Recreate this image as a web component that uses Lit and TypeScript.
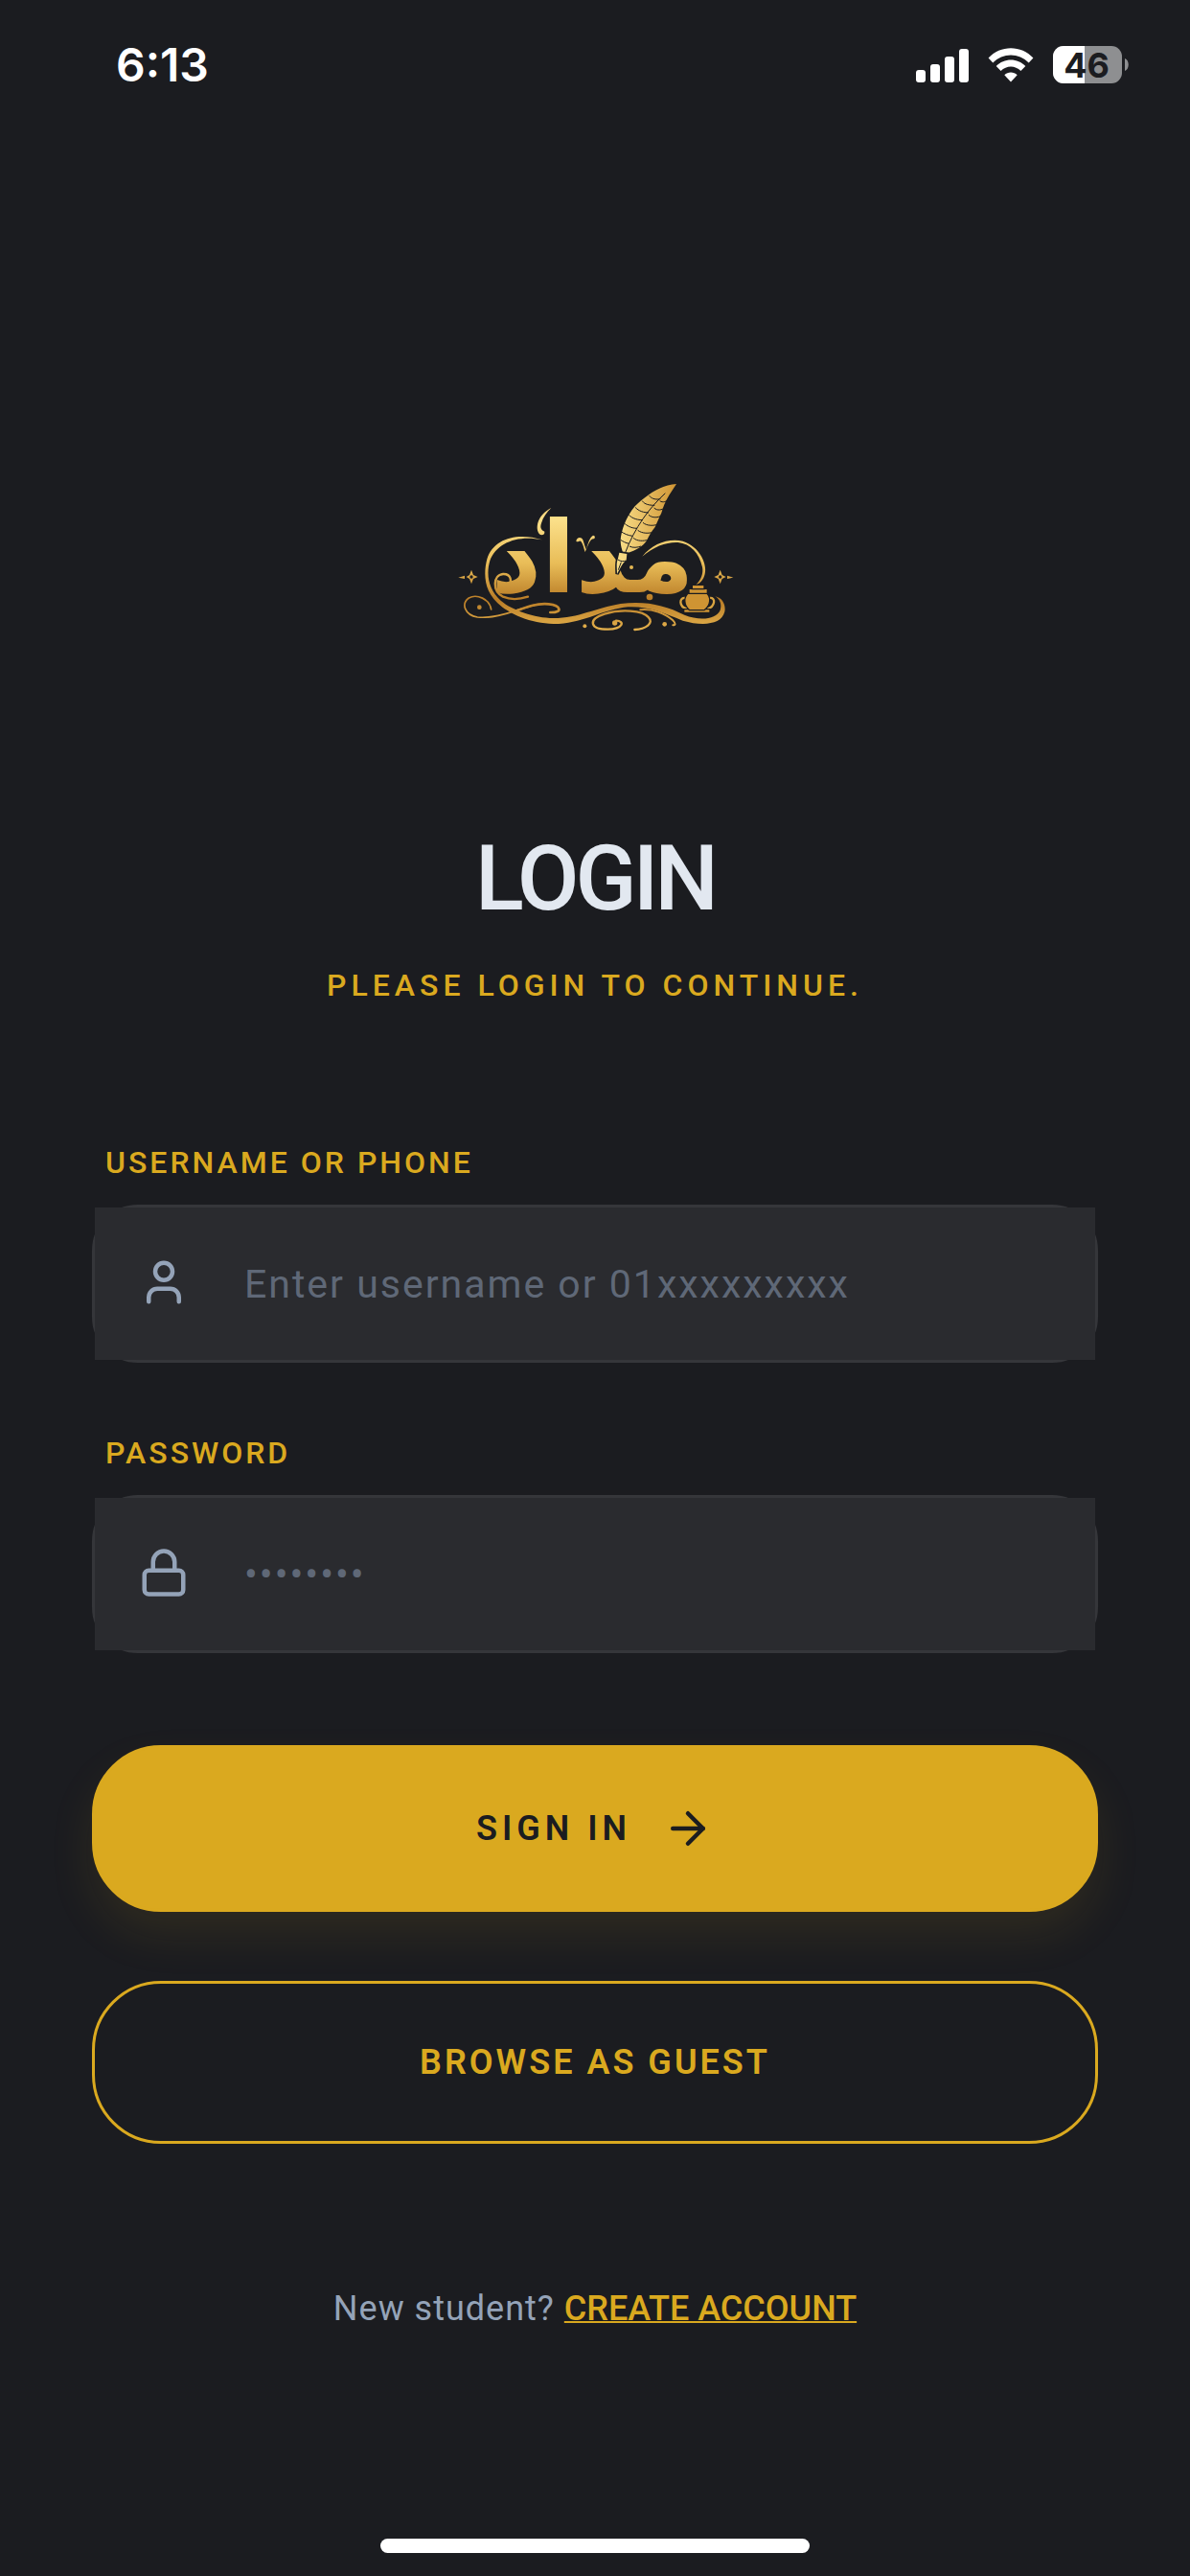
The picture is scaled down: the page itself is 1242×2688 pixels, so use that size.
import { LitElement, html, css, svg } from 'lit';
import { customElement, property, state } from 'lit/decorators.js';

const icons = {
  user: svg`
    <path d="M19 21v-2a4 4 0 0 0-4-4H9a4 4 0 0 0-4 4v2" />
    <circle cx="12" cy="7" r="4" />
  `,
  lock: svg`
    <rect x="3" y="11" width="18" height="11" rx="2" />
    <path d="M7 11V7a5 5 0 0 1 10 0v4" />
  `,
  arrow: svg`
    <path d="M5 12h14" />
    <path d="M12 5l7 7-7 7" />
  `,
};

/**
 * Phone status bar: clock, signal, wifi and battery.
 */
@customElement('status-bar')
export class StatusBar extends LitElement {
  static styles = css`
    :host {
      display: flex;
      align-items: center;
      justify-content: space-between;
      box-sizing: border-box;
      height: 136px;
      padding: 0 63px 0 121px;
      color: #ffffff;
      font-family: Inter, 'Liberation Sans', sans-serif;
    }

    .time {
      font-size: 48px;
      font-weight: 600;
      line-height: 56px;
    }

    .indicators {
      display: flex;
      align-items: center;
      gap: 20px;
    }

    svg {
      display: block;
      overflow: visible;
    }

    .level {
      font-size: 36px;
      font-weight: 700;
    }
  `;

  @property({ type: String })
  time = '6:13';

  @property({ type: Number })
  battery = 46;

  render() {
    return html`
      <span class="time">${this.time}</span>
      <div class="indicators">
        <svg width="55" height="36" viewBox="0 0 55 36" fill="#fff" aria-hidden="true">
          <rect x="0" y="23" width="10" height="13" rx="3" />
          <rect x="15" y="17" width="10" height="19" rx="3" />
          <rect x="30" y="9" width="10" height="27" rx="3" />
          <rect x="45" y="1" width="10" height="35" rx="3" />
        </svg>
        <svg width="48" height="36" viewBox="0 0 48 36" fill="#fff" aria-hidden="true">
          <path d="M.6 10.600C13 -3.200 35 -3.200 47.400 10.600L42.700 15.600C32.500 4.800 15.500 4.800 5.300 15.600Z" />
          <path d="M8.700 18.900C17 10.200 31 10.200 39.300 18.900L34.400 24C28.500 18 19.500 18 13.600 24Z" />
          <path d="M17.300 28.200C21 24.700 27 24.700 30.700 28.200L24 35.600Z" />
        </svg>
        <svg width="80" height="40" viewBox="0 0 80 40" aria-label="Battery">
          <defs>
            <clipPath id="shell"><rect x="0" y="0" width="72" height="39" rx="11" /></clipPath>
          </defs>
          <g clip-path="url(#shell)">
            <rect width="72" height="39" fill="#8e8f91" />
            <rect width="33" height="39" fill="#fff" />
          </g>
          <path d="M75 13C80 15 80 24 75 26Z" fill="#8e8f91" />
          <text class="level" x="35" y="33" text-anchor="middle" fill="#1b1c20">${this.battery}</text>
        </svg>
      </div>
    `;
  }
}

/**
 * Gold wordmark with feather, inkpot and flourishes.
 */
@customElement('brand-logo')
export class BrandLogo extends LitElement {
  static styles = css`
    :host {
      display: block;
    }

    svg {
      display: block;
      width: 320px;
      height: 180px;
      overflow: visible;
    }

    .word {
      font-family: 'DejaVu Sans', sans-serif;
      font-size: 310px;
      font-weight: 700;
    }
  `;

  render() {
    return html`
      <svg viewBox="0 0 960 540" role="img" aria-label="مداد">
        <defs>
          <linearGradient id="gold" x1="0" y1="40" x2="0" y2="500" gradientUnits="userSpaceOnUse">
            <stop offset="0" stop-color="#d9a13c" />
            <stop offset="0.250" stop-color="#fbe08a" />
            <stop offset="0.550" stop-color="#e9bd58" />
            <stop offset="0.800" stop-color="#b97c26" />
            <stop offset="1" stop-color="#e3b04c" />
          </linearGradient>
          <linearGradient id="plume" x1="560" y1="0" x2="735" y2="0" gradientUnits="userSpaceOnUse">
            <stop offset="0" stop-color="#f8dc85" />
            <stop offset="1" stop-color="#cf9433" />
          </linearGradient>
        </defs>

        <text class="word" x="472" y="385" text-anchor="middle" fill="url(#gold)">مداد</text>

        <g fill="url(#gold)">
          <path d="M315 220C240 204 172 228 151 285C138 330 147 375 185 410C220 440 290 464 350 465C430 465 480 433 560 420C640 410 700 425 760 455C810 475 860 468 872 440C878 420 870 405 856 397C880 401 890 425 886 445C876 487 815 490 755 473C690 447 640 424 570 431C490 444 440 482 350 483C280 482 210 452 175 418C133 380 130 325 142 280C163 213 240 196 315 220Z" />
          <path d="M628 272C660 232 710 214 755 224C808 240 836 300 822 334C816 350 806 358 794 362C812 346 820 325 816 305C806 262 780 232 740 228C705 226 665 240 628 272Z" />
          <path d="M343 120C312 135 292 168 302 196C307 210 324 206 322 194C312 190 307 182 312 168C317 150 329 134 343 120Z" />
          <path d="M421 224C423 209 442 210 444 226C447 236 449 242 452 250C458 232 463 212 474 206C482 206 481 218 474 217C463 220 458 238 449 258C444 243 442 230 435 224C430 221 426 230 421 224Z" />
          <path d="M93 314L99 330L113 336L99 342L93 358L87 342L77 336L87 330Z" />
          <path d="M52 338L72 332V342Z" />
          <path d="M872 314L878 330L890 336L878 342L872 358L866 342L853 336L866 330Z" />
          <path d="M913 338L894 332V342Z" />
          <circle cx="118" cy="431" r="7" />
          <circle cx="594" cy="306" r="6" />
          <circle cx="651" cy="399" r="10" />
          <circle cx="448" cy="490" r="6" />
          <circle cx="698" cy="484" r="7" />
          <circle cx="542" cy="480" r="8" />
        </g>
        <g fill="#1b1c20">
          <circle cx="93" cy="336" r="5" />
          <circle cx="872" cy="336" r="5" />
        </g>

        <g fill="none" stroke="url(#gold)" stroke-linecap="round">
          <path stroke-width="7" d="M206 361C222 352 218 326 192 327C160 330 158 380 192 398C215 408 245 406 270 398" />
          <path stroke-width="5" d="M155 438C150 405 110 388 85 402C60 420 72 455 112 462C170 468 230 440 290 424" />
          <path stroke-width="8" d="M225 445C265 430 300 417 335 421C372 425 382 448 340 447" />
          <path stroke-width="7" d="M604 501C640 499 665 480 648 463C630 440 560 436 510 452C455 470 465 500 520 500C568 499 575 474 546 473" />
          <path stroke-width="6" d="M622 439C660 435 700 450 724 472C734 482 732 488 724 487" />
        </g>

        <path
          fill="url(#plume)"
          stroke="#1b1c20"
          stroke-width="6"
          paint-order="stroke"
          d="M735 45C690 46 640 80 605 115C575 150 562 195 560 220C560 240 565 252 568 262L580 262C610 252 630 240 642 222C650 206 656 194 668 180C675 165 680 152 688 136C692 120 700 100 712 80Z"
        />
        <g fill="none" stroke="#1b1c20" stroke-width="3">
          <path d="M700 74C650 120 605 180 574 262" />
          <path d="M685 92C665 96 655 88 650 82M667 112C640 112 632 104 628 98M648 135C622 134 612 124 606 118M630 158C605 158 592 148 586 142M612 184C592 184 578 174 572 168M598 208C582 206 570 200 562 194M587 232C576 230 566 224 560 220" />
          <path d="M683 98C692 105 705 100 712 92M665 120C675 130 690 126 698 120M648 142C660 153 680 150 688 144M630 166C642 177 665 176 674 172M614 190C628 201 650 200 660 196M600 214C612 225 634 224 644 220M588 240C598 246 614 244 624 240" />
        </g>
        <path
          fill="url(#plume)"
          stroke="#1b1c20"
          stroke-width="10"
          paint-order="stroke"
          d="M556 260L580 264L578 284C568 290 560 306 549 327C549 308 546 294 551 282Z"
        />
        <path fill="none" stroke="#1b1c20" stroke-width="3" d="M552 282C560 288 570 288 578 285M562 290L553 314" />

        <g fill="url(#plume)" stroke="#1b1c20" stroke-width="4">
          <path d="M765 402C742 398 742 430 768 436M838 402C860 398 856 430 832 436" fill="none" stroke="#d9a441" stroke-width="7" />
          <path d="M758 437H840V448H758Z" />
          <path d="M776 384C755 398 758 425 776 440H822C842 425 846 398 826 384Z" />
          <path d="M774 373H832V388H774Z" />
          <path d="M784 361H822V374H784Z" />
        </g>
      </svg>
    `;
  }
}

/**
 * Labelled text field with a leading icon.
 */
@customElement('icon-field')
export class IconField extends LitElement {
  static styles = css`
    :host {
      display: flex;
      flex-direction: column;
      gap: 24px;
    }

    label {
      padding-left: 14px;
      color: #daa91f;
      font-size: 32px;
      font-weight: 500;
      line-height: 40px;
      letter-spacing: 3px;
      text-transform: uppercase;
    }

    .box {
      display: grid;
      align-items: center;
      border: 3px solid #35363a;
      border-radius: 48px;
    }

    .box > * {
      grid-area: 1 / 1;
    }

    svg {
      width: 54px;
      height: 54px;
      margin-left: 45px;
      padding-bottom: 3px;
      z-index: 1;
      pointer-events: none;
      fill: none;
      stroke: #94a3b8;
      stroke-width: 2;
      stroke-linecap: round;
      stroke-linejoin: round;
    }

    input {
      box-sizing: border-box;
      width: 100%;
      height: 159px;
      margin: 0;
      padding: 0 48px 0 156px;
      border: 0;
      border-radius: 0;
      background: #2a2b2f;
      color: #e2e8f0;
      font-family: inherit;
      font-size: 41px;
      letter-spacing: 2px;
      outline: none;
    }

    input::placeholder {
      color: #5f6877;
      opacity: 1;
    }
  `;

  @property({ type: String })
  label = '';

  @property({ type: String })
  type: 'text' | 'password' = 'text';

  @property({ type: String })
  placeholder = '';

  @property({ type: String })
  icon: 'user' | 'lock' = 'user';

  @state()
  private value = '';

  private handleInput(e: Event): void {
    this.value = (e.target as HTMLInputElement).value;
    this.dispatchEvent(
      new CustomEvent('field-change', {
        detail: { value: this.value },
        bubbles: true,
        composed: true,
      })
    );
  }

  render() {
    return html`
      <label for="control">${this.label}</label>
      <div class="box">
        <svg viewBox="0 0 24 24" aria-hidden="true">${icons[this.icon]}</svg>
        <input
          id="control"
          type=${this.type}
          placeholder=${this.placeholder}
          .value=${this.value}
          @input=${this.handleInput}
        />
      </div>
    `;
  }
}

@customElement('app-root')
export class AppRoot extends LitElement {
  static styles = css`
    :host {
      display: flex;
      flex-direction: column;
      box-sizing: border-box;
      min-height: 100vh;
      background: #1b1c20;
      color: #e2e8f0;
      font-family: Roboto, 'Liberation Sans', sans-serif;
    }

    main {
      flex: 1;
      display: flex;
      flex-direction: column;
      padding: 354px 96px 0;
    }

    .intro {
      display: flex;
      flex-direction: column;
      align-items: center;
      text-align: center;
    }

    h1 {
      margin: 191px 0 35px;
      font-size: 94px;
      font-weight: 500;
      line-height: 112px;
      letter-spacing: -4px;
    }

    .subtitle {
      margin: 0;
      color: #daa91f;
      font-size: 32px;
      font-weight: 500;
      line-height: 40px;
      letter-spacing: 5px;
      text-transform: uppercase;
    }

    form {
      display: flex;
      flex-direction: column;
      margin-top: 145px;
    }

    .fields {
      display: flex;
      flex-direction: column;
      gap: 74px;
      margin-bottom: 96px;
    }

    .actions {
      display: flex;
      flex-direction: column;
      gap: 72px;
    }

    button {
      display: flex;
      align-items: center;
      justify-content: center;
      gap: 32px;
      box-sizing: border-box;
      width: 100%;
      margin: 0;
      border: 3px solid #daa91f;
      border-radius: 72px;
      font-family: inherit;
      font-size: 36px;
      font-weight: 600;
      line-height: 48px;
      letter-spacing: 3px;
      text-transform: uppercase;
      cursor: pointer;
    }

    .primary {
      padding: 57px 48px;
      background: #daa91f;
      color: #1b1c20;
      letter-spacing: 5px;
      box-shadow: 0 24px 48px rgba(218, 169, 31, 0.1);
    }

    .primary svg {
      width: 54px;
      height: 54px;
      fill: none;
      stroke: currentColor;
      stroke-width: 2;
      stroke-linecap: round;
      stroke-linejoin: round;
    }

    .outline {
      padding: 58px 48px;
      background: transparent;
      color: #daa91f;
    }

    .signup {
      margin: 148px 0 0;
      color: #94a3b8;
      font-size: 36px;
      line-height: 48px;
      letter-spacing: 1px;
      text-align: center;
    }

    .signup a {
      color: #daa91f;
      font-weight: 500;
      letter-spacing: 0;
      text-decoration: underline;
      text-decoration-thickness: 2px;
      text-underline-offset: 1px;
      text-decoration-skip-ink: none;
    }

    .home-indicator {
      align-self: center;
      width: 36%;
      height: 15px;
      margin-bottom: 24px;
      border-radius: 8px;
      background: #ffffff;
    }
  `;

  private handleSubmit(e: Event): void {
    e.preventDefault();
  }

  render() {
    return html`
      <status-bar></status-bar>
      <main>
        <div class="intro">
          <brand-logo></brand-logo>
          <h1>LOGIN</h1>
          <p class="subtitle">Please login to continue.</p>
        </div>
        <form @submit=${this.handleSubmit}>
          <div class="fields">
            <icon-field
              label="Username or phone"
              icon="user"
              placeholder="Enter username or 01xxxxxxxxx"
            ></icon-field>
            <icon-field
              label="Password"
              icon="lock"
              type="password"
              placeholder="••••••••"
            ></icon-field>
          </div>
          <div class="actions">
            <button class="primary" type="submit">
              <span>Sign in</span>
              <svg viewBox="0 0 24 24" aria-hidden="true">${icons.arrow}</svg>
            </button>
            <button class="outline" type="button">Browse as guest</button>
          </div>
        </form>
        <p class="signup">New student? <a href="#create-account">CREATE ACCOUNT</a></p>
      </main>
      <div class="home-indicator"></div>
    `;
  }
}

declare global {
  interface HTMLElementTagNameMap {
    'app-root': AppRoot;
    'status-bar': StatusBar;
    'brand-logo': BrandLogo;
    'icon-field': IconField;
  }
}
